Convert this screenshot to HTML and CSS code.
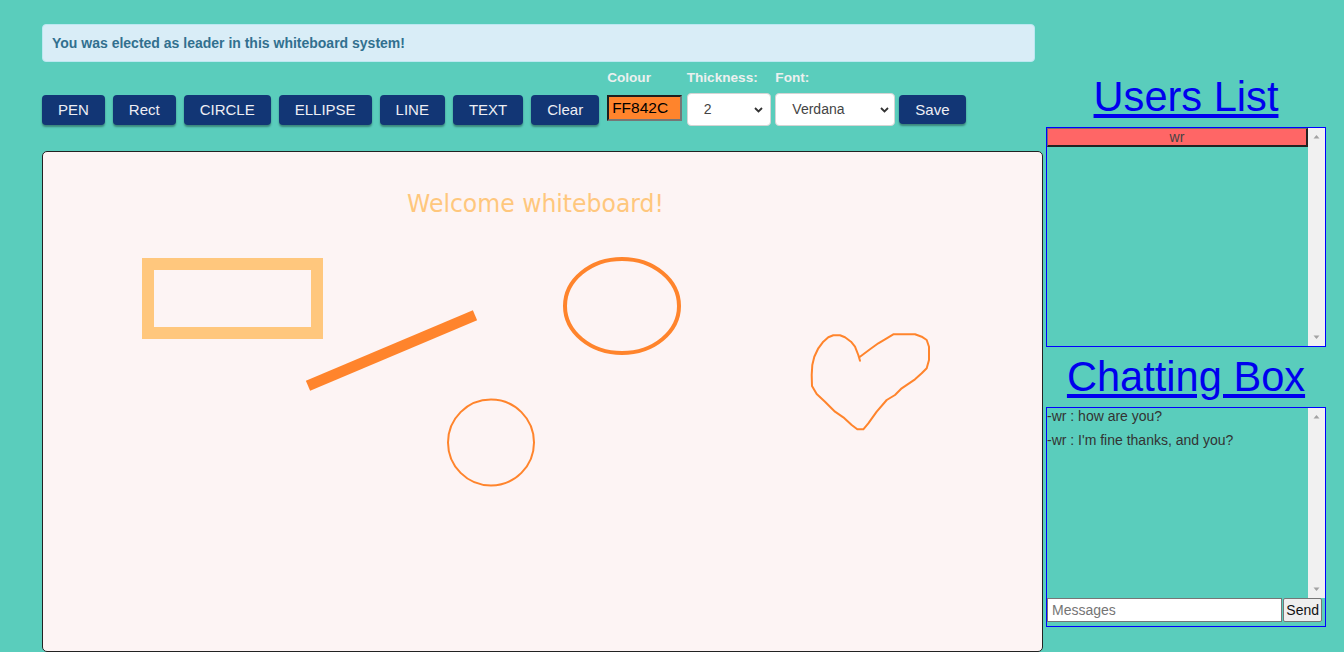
FILE: index.html
```html
<!DOCTYPE html>
<html>
<head>
<meta charset="utf-8">
<title>Whiteboard</title>
<link rel="stylesheet" href="styles.css">
</head>
<body>
<div class="page">
  <div class="left">
    <div class="alert">You was elected as leader in this whiteboard system!</div>
    <div class="toolbar">
      <button class="tool">PEN</button>
      <button class="tool">Rect</button>
      <button class="tool">CIRCLE</button>
      <button class="tool">ELLIPSE</button>
      <button class="tool">LINE</button>
      <button class="tool">TEXT</button>
      <button class="tool">Clear</button>
      <div class="field field-colour">
        <div class="label">Colour</div>
        <div class="colour-input">FF842C</div>
      </div>
      <div class="field">
        <div class="label">Thickness:</div>
        <div class="select select-thick">
          <span>2</span>
          <svg class="chev" width="9" height="6" viewBox="0 0 9 6"><path d="M1 1 L4.5 4.5 L8 1" fill="none" stroke="#333" stroke-width="1.8"/></svg>
        </div>
      </div>
      <div class="field">
        <div class="label">Font:</div>
        <div class="select select-font">
          <span>Verdana</span>
          <svg class="chev" width="9" height="6" viewBox="0 0 9 6"><path d="M1 1 L4.5 4.5 L8 1" fill="none" stroke="#333" stroke-width="1.8"/></svg>
        </div>
      </div>
      <button class="tool tool-save">Save</button>
    </div>
    <div class="board">
      <svg class="board-svg" width="999" height="499" viewBox="43 152 999 499">
        <text x="407" y="211.5" font-family="DejaVu Sans, Verdana, sans-serif" font-size="24" fill="#FFC77D" textLength="257" lengthAdjust="spacingAndGlyphs">Welcome whiteboard!</text>
        <rect x="148" y="264" width="169" height="69" fill="none" stroke="#FFC77D" stroke-width="12"/>
        <line x1="308" y1="385.8" x2="475" y2="315.3" stroke="#FF842C" stroke-width="11"/>
        <ellipse cx="622" cy="306" rx="57" ry="47" fill="none" stroke="#FF842C" stroke-width="4"/>
        <circle cx="491" cy="442.5" r="43" fill="none" stroke="#FF842C" stroke-width="2"/>
        <polyline fill="none" stroke="#FF842C" stroke-width="2" stroke-linejoin="round" stroke-linecap="round" points="860,360.7 858.3,355 855,346.7 851,341.7 845,337.3 840,335.3 833.3,335.3 828.3,337.3 823.3,341.7 818.3,348.3 814.3,356.7 812.3,365 811.7,375 812,386 816.7,394 825,401.7 835,411.7 843.3,417.3 851.7,425 857.3,429.3 863.3,429.3 868.3,423.3 876.7,411.7 886.7,400 895,395 901.7,388.3 915,379.3 921.7,373.3 926.7,368.3 929,360 929,346.7 926.7,340 921.7,336.7 915,334.3 893.3,334.3 886.7,338.3 878.3,343.3 870,349.3 860,356.7"/>
      </svg>
    </div>
  </div>
  <div class="right">
    <h2 class="title title-users">Users List</h2>
    <div class="box users-box">
      <div class="box-content">
        <div class="user-row">wr</div>
      </div>
      <div class="sb">
        <div class="sb-btn"><svg width="17" height="17" viewBox="0 0 17 17"><polygon points="5.5,10.5 11.5,10.5 8.5,7" fill="#a3a3a3"/></svg></div>
        <div class="sb-btn"><svg width="17" height="17" viewBox="0 0 17 17"><polygon points="5.5,6.5 11.5,6.5 8.5,10" fill="#a3a3a3"/></svg></div>
      </div>
    </div>
    <h2 class="title title-chat">Chatting Box</h2>
    <div class="box chat-box">
      <div class="messages">
        <div class="box-content">
          <div class="msg">-wr : how are you?</div>
          <div class="msg">-wr : I'm fine thanks, and you?</div>
        </div>
        <div class="sb">
          <div class="sb-btn"><svg width="17" height="17" viewBox="0 0 17 17"><polygon points="5.5,10.5 11.5,10.5 8.5,7" fill="#a3a3a3"/></svg></div>
          <div class="sb-btn"><svg width="17" height="17" viewBox="0 0 17 17"><polygon points="5.5,6.5 11.5,6.5 8.5,10" fill="#a3a3a3"/></svg></div>
        </div>
      </div>
      <div class="chat-form">
        <input class="chat-input" type="text" placeholder="Messages">
        <button class="send-btn">Send</button>
      </div>
    </div>
  </div>
</div>
</body>
</html>
```
FILE: styles.css
```css
html, body {
  margin: 0;
  padding: 0;
}
body {
  background: #5acdbc;
  font-family: "Liberation Sans", Arial, sans-serif;
  width: 1344px;
  height: 652px;
  overflow: hidden;
}
.page {
  display: flex;
  align-items: flex-start;
  padding-left: 42px;
  gap: 3px;
}
.left {
  width: 1001px;
  padding-top: 24px;
}
.alert {
  width: 993px;
  height: 38px;
  box-sizing: border-box;
  padding: 8px 9px;
  background: #d9edf7;
  border: 1px solid #bce8f1;
  border-radius: 4px;
  color: #31708f;
  font-weight: bold;
  font-size: 14px;
  line-height: 20px;
}
.toolbar {
  display: flex;
  align-items: flex-start;
  margin-top: 8px;
  height: 56px;
}
.tool {
  margin: 25px 8px 0 0;
  height: 30px;
  padding: 0 16px;
  border: none;
  border-radius: 4px;
  background: #123675;
  color: #eeeef4;
  font-family: "Liberation Sans", Arial, sans-serif;
  font-size: 15px;
  line-height: 30px;
  box-shadow: 0 2px 2px rgba(0, 0, 0, 0.35);
  cursor: pointer;
}
.tool-save {
  margin: 25px 0 0 4.7px;
  height: 29px;
  line-height: 29px;
}
.field {
  display: flex;
  flex-direction: column;
  margin-left: 4.6px;
}
.field-colour {
  margin-left: 0;
}
.label {
  font-size: 13.6px;
  font-weight: bold;
  line-height: 15px;
  color: #ecf0ef;
  padding-left: 0;
}
.colour-input {
  margin-top: 10px;
  width: 75px;
  height: 26px;
  box-sizing: border-box;
  border-style: solid;
  border-width: 2px;
  border-color: #1e1e1e #767676 #767676 #1e1e1e;
  background: #ff842c;
  color: #000;
  font-size: 15.5px;
  line-height: 22px;
  padding-left: 3px;
}
.select {
  margin-top: 8px;
  height: 33px;
  box-sizing: border-box;
  background: #fff;
  border: 1px solid #d4d4d4;
  border-radius: 4px;
  display: flex;
  align-items: center;
  justify-content: space-between;
  padding: 0 7px 2px 16px;
  font-size: 14px;
  color: #444;
}
.select-thick {
  width: 84px;
}
.select-font {
  width: 119.3px;
  padding-right: 5px;
}
.chev {
  display: block;
  margin-top: 2px;
}
.board {
  margin-top: 25px;
  width: 1001px;
  height: 501px;
  box-sizing: border-box;
  border: 1px solid #222;
  border-radius: 5px;
  background: #fdf4f4;
  overflow: hidden;
}
.board-svg {
  display: block;
}
.right {
  width: 280px;
  padding-top: 73px;
}
.title {
  margin: 0;
  font-size: 41.6px;
  line-height: 48px;
  font-weight: normal;
  text-align: center;
  color: #0000ee;
  text-decoration: underline;
}
.title-users {
  margin-bottom: 6px;
}
.title-chat {
  margin-top: 6px;
  margin-bottom: 6px;
}
.box {
  width: 280px;
  height: 220px;
  box-sizing: border-box;
  border: 1px solid #0000ff;
}
.users-box {
  display: flex;
}
.box-content {
  flex: 1;
  overflow: hidden;
}
.sb {
  width: 17px;
  background: #f1f1f1;
  display: flex;
  flex-direction: column;
  justify-content: space-between;
}
.sb-btn {
  height: 17px;
}
.sb-btn svg {
  display: block;
}
.user-row {
  height: 19px;
  box-sizing: border-box;
  background: #ff6666;
  border-style: solid;
  border-width: 1px 2px 2px 1px;
  border-color: #707070 #222 #222 #707070;
  text-align: center;
  font-size: 14px;
  line-height: 16px;
  color: #444;
}
.chat-box {
  display: flex;
  flex-direction: column;
}
.messages {
  height: 190px;
  display: flex;
}
.msg {
  font-size: 14px;
  line-height: 16px;
  margin-bottom: 8px;
  color: #333;
}
.chat-form {
  display: flex;
  height: 25px;
  padding-top: 0;
}
.chat-input {
  width: 235px;
  height: 24.4px;
  box-sizing: border-box;
  margin: 0;
  border: 1px solid #767676;
  padding: 0 4px;
  font-family: "Liberation Sans", Arial, sans-serif;
  font-size: 14px;
  color: #222;
  background: #fff;
  outline: none;
}
.chat-input::placeholder {
  color: #757575;
}
.send-btn {
  width: 39.4px;
  height: 24.4px;
  box-sizing: border-box;
  margin: 0 0 0 1px;
  padding: 0;
  border: 1px solid #767676;
  border-radius: 2px;
  background: #efefef;
  font-family: "Liberation Sans", Arial, sans-serif;
  font-size: 14px;
  color: #111;
}
```
